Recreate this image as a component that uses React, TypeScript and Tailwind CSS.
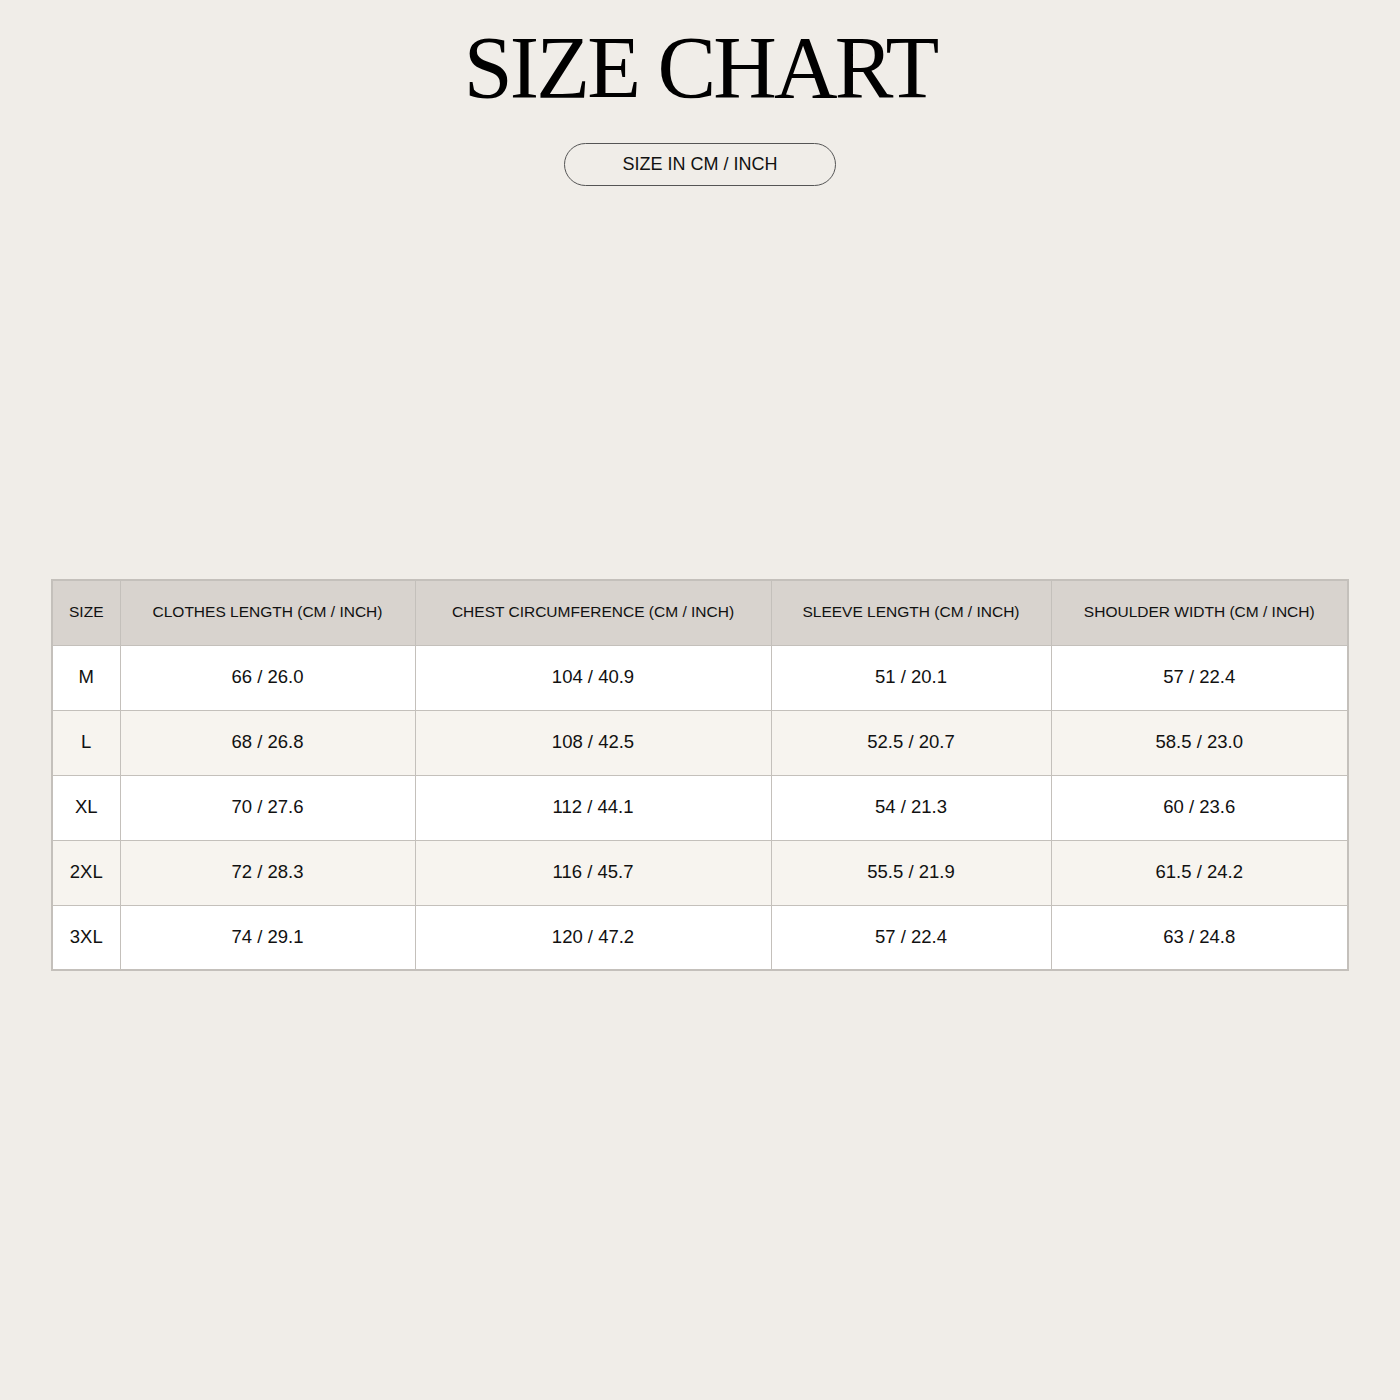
const columns = [
  "SIZE",
  "CLOTHES LENGTH (CM / INCH)",
  "CHEST CIRCUMFERENCE (CM / INCH)",
  "SLEEVE LENGTH (CM / INCH)",
  "SHOULDER WIDTH (CM / INCH)",
];

const widths = ["w-[68px]", "w-[295px]", "w-[356px]", "w-[280px]", "w-[297px]"];

const rows = [
  ["M", "66 / 26.0", "104 / 40.9", "51 / 20.1", "57 / 22.4"],
  ["L", "68 / 26.8", "108 / 42.5", "52.5 / 20.7", "58.5 / 23.0"],
  ["XL", "70 / 27.6", "112 / 44.1", "54 / 21.3", "60 / 23.6"],
  ["2XL", "72 / 28.3", "116 / 45.7", "55.5 / 21.9", "61.5 / 24.2"],
  ["3XL", "74 / 29.1", "120 / 47.2", "57 / 22.4", "63 / 24.8"],
];

export default function App() {
  return (
    <div className="min-h-[1400px] w-[1400px] bg-[#f0ede8] flex flex-col items-center pt-[18px] font-['Liberation_Sans',Arial,sans-serif] text-[#111]">
      <h1 className="font-['Liberation_Serif','Times_New_Roman',serif] text-[88px] leading-[100px] tracking-[-2.8px] text-black">
        SIZE CHART
      </h1>
      <div className="mt-[25px] w-[272px] h-[43px] rounded-full border border-[#555] flex items-center justify-center text-[18px] pb-[1px]">
        SIZE IN CM / INCH
      </div>

      <table className="mt-[393px] border-collapse border-2 border-[#c4c0bb] table-fixed">
        <thead>
          <tr className="bg-[#d8d3ce] h-[65px]">
            {columns.map((col, i) => (
              <th
                key={col}
                className={`${widths[i]} border border-[#c4c0bb] font-normal text-[15.5px] text-center px-0 pb-[3px]`}
              >
                {col}
              </th>
            ))}
          </tr>
        </thead>
        <tbody>
          {rows.map((row, r) => (
            <tr key={row[0]} className={`h-[65px] ${r % 2 === 1 ? "bg-[#f7f4ef]" : "bg-white"}`}>
              {row.map((cell, i) => (
                <td key={i} className="border border-[#c4c0bb] text-center text-[18.5px] pb-[1px]">
                  {cell}
                </td>
              ))}
            </tr>
          ))}
        </tbody>
      </table>
    </div>
  );
}
